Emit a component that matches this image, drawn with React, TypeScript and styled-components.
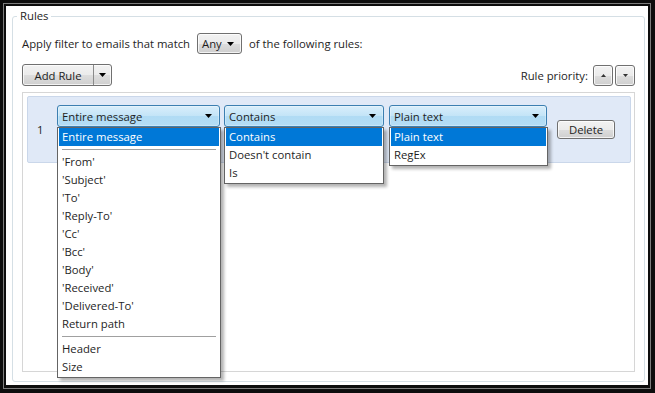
import React from "react";
import styled, { createGlobalStyle, css } from "styled-components";

const GlobalStyle = createGlobalStyle`
  html, body {
    margin: 0;
    padding: 0;
    background: #ffffff;
  }
  body {
    font-family: "Open Sans", "Noto Sans", sans-serif;
    font-size: 11.3px;
    color: #1e1e1e;
  }
  * {
    box-sizing: border-box;
  }
`;

const Frame = styled.div`
  width: 655px;
  height: 393px;
  background: #0d0d0d;
  padding: 3px 4px 4px 3px;
  display: flex;
`;

const Bezel = styled.div`
  flex: 1;
  display: flex;
  border: 1px solid #7d7d7d;
  background: #0d0d0d;
  padding: 2px 2px 3px 2px;
`;

const Client = styled.div`
  flex: 1;
  display: flex;
  background: #ffffff;
  padding: 2px 3px 3px 6px;
`;

const GroupBox = styled.fieldset`
  flex: 1;
  margin: 0;
  border: 1px solid #d5dfe5;
  border-radius: 3px;
  padding: 9px 9px 9px 9px;
  display: flex;
  flex-direction: column;
  min-width: 0;
`;

const Caption = styled.legend`
  padding: 0 3px;
  margin-left: -5px;
  line-height: 16px;
  color: #1e1e1e;
`;

const MatchLine = styled.div`
  display: flex;
  align-items: center;
  height: 21px;
  gap: 7px;
`;

const Toolbar = styled.div`
  display: flex;
  align-items: center;
  margin-top: 10px;
  height: 22px;
`;

const buttonFace = css`
  border: 1px solid #707070;
  border-radius: 3px;
  background: linear-gradient(#f2f2f2 0%, #ebebeb 50%, #dddddd 51%, #cfcfcf 100%);
  box-shadow: inset 0 0 0 1px rgba(255, 255, 255, 0.75);
  font: inherit;
  color: #1e1e1e;
  padding: 0;
`;

const ComboButton = styled.div<{ $open?: boolean }>`
  ${buttonFace};
  display: flex;
  align-items: center;
  justify-content: space-between;
  height: 100%;
  padding: 0 7px 0 4px;
  ${(p) =>
    p.$open &&
    css`
      border-color: #3c7fb1;
      background: linear-gradient(#d9eefb 0%, #c3e4f7 50%, #b0dbf4 51%, #b4ddf5 100%);
      box-shadow: inset 0 0 0 1px rgba(255, 255, 255, 0.3);
    `}
`;

const AnyCombo = styled.div`
  width: 45px;
  height: 21px;
`;

const SplitButton = styled.div`
  ${buttonFace};
  display: flex;
  height: 22px;
`;

const SplitMain = styled.div`
  width: 71px;
  display: flex;
  align-items: center;
  justify-content: center;
  border-right: 1px solid #8a8a8a;
`;

const SplitArrow = styled.div`
  width: 17px;
  display: flex;
  align-items: center;
  justify-content: center;
`;

const Spacer = styled.div`
  flex: 1;
`;

const PriorityLabel = styled.span`
  margin-right: 5px;
`;

const SmallButton = styled.div`
  ${buttonFace};
  width: 20px;
  height: 21px;
  display: flex;
  align-items: center;
  justify-content: center;
  & + & {
    margin-left: 2px;
  }
`;

const ListBox = styled.div`
  margin-top: 6px;
  flex: 1;
  border: 1px solid #d6d6d6;
  padding: 3px 3px 0 4px;
  display: flex;
  flex-direction: column;
`;

const RuleRow = styled.div`
  height: 67px;
  display: flex;
  align-items: center;
  background: #e0e9f7;
  border: 1px solid #cad7ea;
  border-radius: 2px;
`;

const RuleIndex = styled.span`
  width: 29px;
  padding-left: 9px;
`;

const ComboSlot = styled.div<{ $width: number; $gap: number }>`
  position: relative;
  width: ${(p) => p.$width}px;
  height: 22px;
  margin-left: ${(p) => p.$gap}px;
  align-self: flex-start;
  margin-top: 8px;
`;

const DropList = styled.div<{ $width: number }>`
  position: absolute;
  left: 0;
  top: 100%;
  width: ${(p) => p.$width}px;
  background: #ffffff;
  border: 1px solid #646464;
  padding: 0 1px 1px 1px;
  box-shadow: 3px 3px 3px rgba(0, 0, 0, 0.3);
  z-index: 2;
`;

const DropItem = styled.div<{ $selected?: boolean }>`
  height: 18px;
  line-height: 18px;
  padding-left: 3px;
  white-space: nowrap;
  color: ${(p) => (p.$selected ? "#ffffff" : "#1e1e1e")};
  background: ${(p) => (p.$selected ? "#0078d7" : "transparent")};
`;

const Separator = styled.div`
  height: 7px;
  display: flex;
  align-items: center;
  padding: 0 3px 0 3px;
  &::after {
    content: "";
    flex: 1;
    height: 1px;
    background: #a0a0a0;
  }
`;

const PushButton = styled.div`
  ${buttonFace};
  width: 58px;
  height: 19px;
  margin-left: 10px;
  display: flex;
  align-items: center;
  justify-content: center;
`;

const Down = ({ color = "#000" }: { color?: string }) => (
  <svg width="7" height="4" viewBox="0 0 7 4">
    <polygon points="0,0 7,0 3.5,4" fill={color} />
  </svg>
);

const Up = () => (
  <svg width="5" height="3" viewBox="0 0 5 3">
    <polygon points="0,3 5,3 2.5,0" fill="#333" />
  </svg>
);

const Down5 = () => (
  <svg width="5" height="3" viewBox="0 0 5 3">
    <polygon points="0,0 5,0 2.5,3" fill="#333" />
  </svg>
);

type Entry = string | null;

const fields: Entry[] = [
  "Entire message",
  null,
  "'From'",
  "'Subject'",
  "'To'",
  "'Reply-To'",
  "'Cc'",
  "'Bcc'",
  "'Body'",
  "'Received'",
  "'Delivered-To'",
  "Return path",
  null,
  "Header",
  "Size",
];

const conditions: Entry[] = ["Contains", "Doesn't contain", "Is"];
const kinds: Entry[] = ["Plain text", "RegEx"];

interface ComboProps {
  width: number;
  gap: number;
  listWidth: number;
  items: Entry[];
}

const OpenCombo = ({ width, gap, listWidth, items }: ComboProps) => (
  <ComboSlot $width={width} $gap={gap}>
    <ComboButton $open>
      <span>{items[0]}</span>
      <Down />
    </ComboButton>
    <DropList $width={listWidth}>
      {items.map((item, i) =>
        item === null ? (
          <Separator key={i} />
        ) : (
          <DropItem key={i} $selected={i === 0}>
            {item}
          </DropItem>
        )
      )}
    </DropList>
  </ComboSlot>
);

export default function App() {
  return (
    <>
      <GlobalStyle />
      <Frame>
        <Bezel>
          <Client>
            <GroupBox>
              <Caption>Rules</Caption>
              <MatchLine>
                <span>Apply filter to emails that match</span>
                <AnyCombo>
                  <ComboButton>
                    <span>Any</span>
                    <Down />
                  </ComboButton>
                </AnyCombo>
                <span>of the following rules:</span>
              </MatchLine>
              <Toolbar>
                <SplitButton>
                  <SplitMain>Add Rule</SplitMain>
                  <SplitArrow>
                    <Down />
                  </SplitArrow>
                </SplitButton>
                <Spacer />
                <PriorityLabel>Rule priority:</PriorityLabel>
                <SmallButton>
                  <Up />
                </SmallButton>
                <SmallButton>
                  <Down5 />
                </SmallButton>
              </Toolbar>
              <ListBox>
                <RuleRow>
                  <RuleIndex>1</RuleIndex>
                  <OpenCombo width={163} gap={0} listWidth={164} items={fields} />
                  <OpenCombo width={160} gap={4} listWidth={160} items={conditions} />
                  <OpenCombo width={158} gap={5} listWidth={159} items={kinds} />
                  <PushButton>Delete</PushButton>
                </RuleRow>
              </ListBox>
            </GroupBox>
          </Client>
        </Bezel>
      </Frame>
    </>
  );
}
